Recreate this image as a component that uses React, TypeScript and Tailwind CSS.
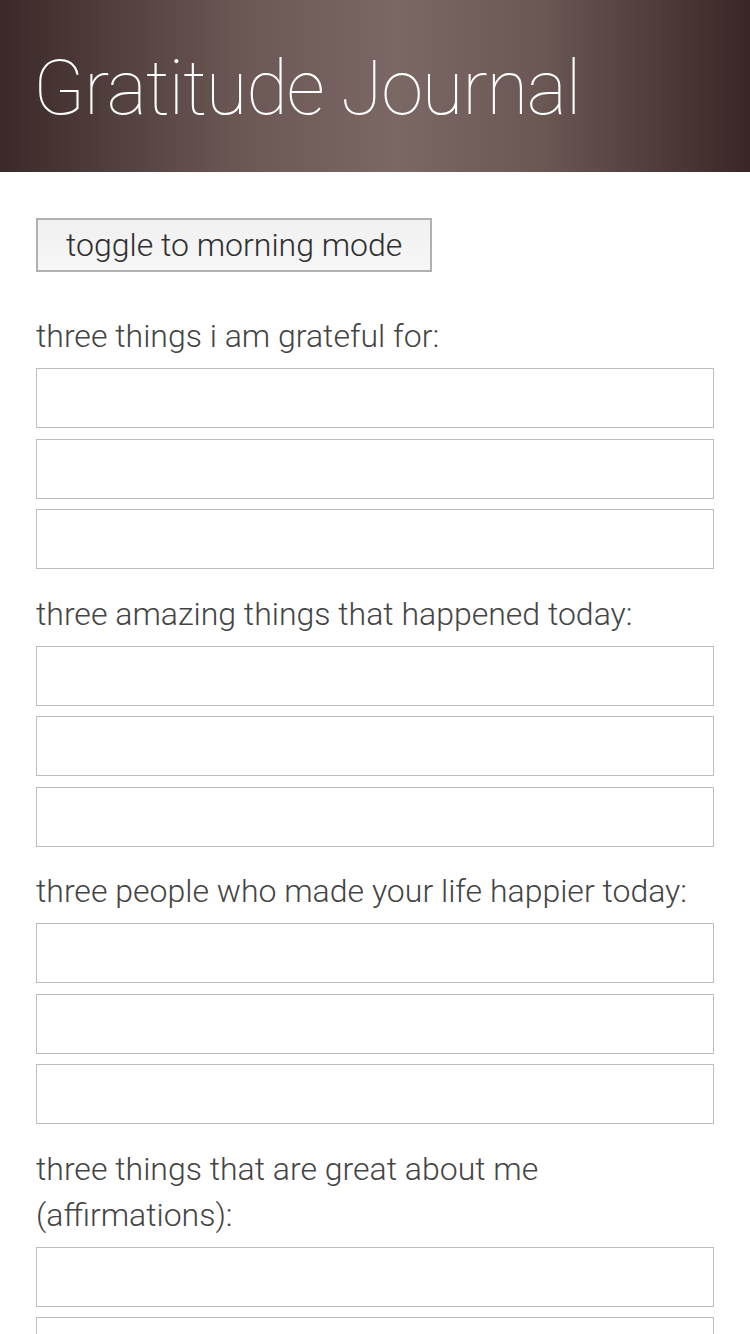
import { useState } from 'react';

const sections = [
  'three things i am grateful for:',
  'three amazing things that happened today:',
  'three people who made your life happier today:',
  'three things that are great about me (affirmations):',
];

export default function App() {
  const [morning, setMorning] = useState(false);

  return (
    <div className="min-h-screen bg-white font-['Roboto','Liberation_Sans',sans-serif] text-[#3a3a3a]">
      <header className="flex h-[172px] items-center bg-[linear-gradient(to_right,#3b2929_0%,#6b5855_32%,#7b6865_53%,#6b5855_72%,#3a2626_100%)] px-[36px]">
        <h1 className="-ml-[3px] pt-[4px] text-[76px] font-thin leading-none tracking-[-1.2px] text-white">
          Gratitude Journal
        </h1>
      </header>

      <main className="px-[36px] pt-[46px]">
        <button
          onClick={() => setMorning(!morning)}
          className="h-[54px] border-2 border-[#b0b0b0] bg-gradient-to-b from-[#f0f0f0] to-[#f7f7f7] px-[28px] text-[32px] font-light leading-none text-[#2e2e2e]"
        >
          toggle to {morning ? 'evening' : 'morning'} mode
        </button>

        <div className="flex flex-col pt-[30px]">
          {sections.map((label, i) => (
            <section key={i} className="flex flex-col">
              <h2 className="mt-[11px] mb-[9px] text-[32px] font-light leading-[46px] text-[#444]">
                {label}
              </h2>
              {[0, 1, 2].map((n) => (
                <input
                  key={n}
                  type="text"
                  className="mb-[10.5px] block h-[60px] w-full border border-[#bdbdbd] bg-white px-3 text-[24px] outline-none"
                />
              ))}
            </section>
          ))}
        </div>
      </main>
    </div>
  );
}
